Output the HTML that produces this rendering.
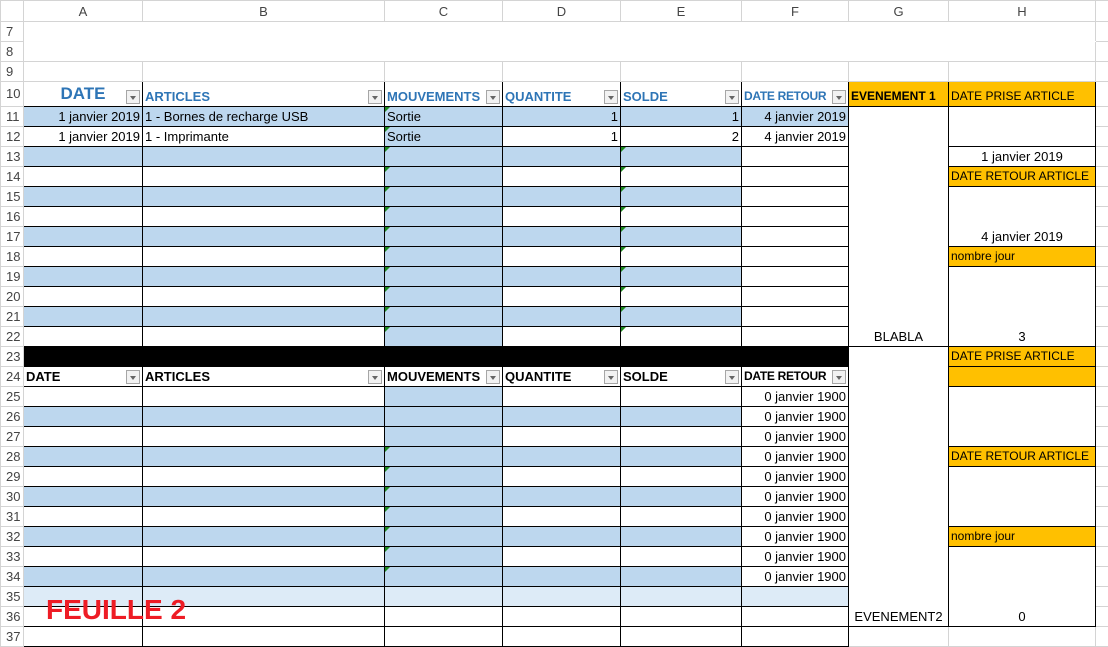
<!DOCTYPE html>
<html><head><meta charset="utf-8"><style>
body{margin:0;width:1108px;height:646px;overflow:hidden;background:#fff;font-family:"Liberation Sans",sans-serif;}
table{border-collapse:collapse;table-layout:fixed;position:absolute;left:0;top:0;width:1108px}
td{padding:0;text-indent:2px;border:1px solid #d4d4d4;height:19px;font-size:13px;color:#000;white-space:nowrap;overflow:hidden;position:relative;line-height:19px}
td.h{color:#444;text-align:left;text-indent:5px;font-size:13px;border-color:#d4d4d4;background:#fff}
tr.ch td{text-align:center;color:#444;height:20px;text-indent:0}
.b{background:#bdd7ee}.l{background:#ddebf7}.o{background:#ffc000;font-size:12px}.k{background:#000}
.x{border:1px solid #000}
.r{text-align:right;text-indent:0;padding-right:2px}
.c{text-align:center;text-indent:0}
.bt{vertical-align:bottom}
.hd{color:#2e75b6;font-weight:bold;}
.hb{font-weight:bold}
.n{font-size:12px;letter-spacing:-0.3px}
.f{position:absolute;right:2px;bottom:2px;width:14px;height:14px;border:1px solid #a6a6a6;background:#f2f2f2;box-sizing:border-box}
.f:after{content:"";position:absolute;left:3px;top:5px;border-left:3px solid transparent;border-right:3px solid transparent;border-top:4px solid #666}
.g:before{content:"";position:absolute;left:0;top:0;border-top:5px solid #1e8a1e;border-right:5px solid transparent}
tr.r10 td{height:24px;line-height:19px;vertical-align:bottom}
</style></head><body>
<table>
<colgroup><col style="width:23px"><col style="width:119px"><col style="width:242px"><col style="width:118px"><col style="width:118px"><col style="width:121px"><col style="width:107px"><col style="width:100px"><col style="width:147px"><col style="width:13px"></colgroup>
<tr class="ch"><td></td><td>A</td><td>B</td><td>C</td><td>D</td><td>E</td><td>F</td><td>G</td><td>H</td><td></td></tr>
<tr><td class="h">7</td><td colspan="8" style="border-bottom-color:#fff"></td><td></td></tr>
<tr><td class="h">8</td><td colspan="8"></td><td></td></tr>
<tr><td class="h">9</td><td></td><td></td><td></td><td></td><td></td><td></td><td></td><td></td><td></td></tr>
<tr class="r10"><td class="h" style="line-height:24px;vertical-align:middle">10</td><td class="x hd c" style="font-size:17px;line-height:24px;vertical-align:middle">DATE<span class="f"></span></td><td class="x hd">ARTICLES<span class="f"></span></td><td class="x hd">MOUVEMENTS<span class="f"></span></td><td class="x hd">QUANTITE<span class="f"></span></td><td class="x hd">SOLDE<span class="f"></span></td><td class="x hd n">DATE RETOUR<span class="f"></span></td><td class="x o hb">EVENEMENT 1</td><td class="x o">DATE PRISE ARTICLE</td><td></td></tr>
<tr><td class="h">11</td><td class="x b r">1 janvier 2019</td><td class="x b">1 - Bornes de recharge USB</td><td class="x b g">Sortie</td><td class="x b r">1</td><td class="x b r">1</td><td class="x b r">4 janvier 2019</td><td class="x c bt" rowspan="12">BLABLA</td><td class="x" rowspan="2"></td><td></td></tr>
<tr><td class="h">12</td><td class="x r">1 janvier 2019</td><td class="x">1 - Imprimante</td><td class="x b g">Sortie</td><td class="x r">1</td><td class="x r">2</td><td class="x r">4 janvier 2019</td><td></td></tr>
<tr><td class="h">13</td><td class="x b"></td><td class="x b"></td><td class="x b g"></td><td class="x b"></td><td class="x b g"></td><td class="x"></td><td class="x c">1 janvier 2019</td><td></td></tr>
<tr><td class="h">14</td><td class="x"></td><td class="x"></td><td class="x b g"></td><td class="x"></td><td class="x g"></td><td class="x"></td><td class="x o">DATE RETOUR ARTICLE</td><td></td></tr>
<tr><td class="h">15</td><td class="x b"></td><td class="x b"></td><td class="x b g"></td><td class="x b"></td><td class="x b g"></td><td class="x"></td><td class="x c bt" rowspan="3">4 janvier 2019</td><td></td></tr>
<tr><td class="h">16</td><td class="x"></td><td class="x"></td><td class="x b g"></td><td class="x"></td><td class="x g"></td><td class="x"></td><td></td></tr>
<tr><td class="h">17</td><td class="x b"></td><td class="x b"></td><td class="x b g"></td><td class="x b"></td><td class="x b g"></td><td class="x"></td><td></td></tr>
<tr><td class="h">18</td><td class="x"></td><td class="x"></td><td class="x b g"></td><td class="x"></td><td class="x g"></td><td class="x"></td><td class="x o">nombre jour</td><td></td></tr>
<tr><td class="h">19</td><td class="x b"></td><td class="x b"></td><td class="x b g"></td><td class="x b"></td><td class="x b g"></td><td class="x"></td><td class="x c bt" rowspan="4">3</td><td></td></tr>
<tr><td class="h">20</td><td class="x"></td><td class="x"></td><td class="x b g"></td><td class="x"></td><td class="x g"></td><td class="x"></td><td></td></tr>
<tr><td class="h">21</td><td class="x b"></td><td class="x b"></td><td class="x b g"></td><td class="x b"></td><td class="x b g"></td><td class="x"></td><td></td></tr>
<tr><td class="h">22</td><td class="x"></td><td class="x"></td><td class="x b g"></td><td class="x"></td><td class="x g"></td><td class="x"></td><td></td></tr>
<tr><td class="h">23</td><td class="x k"></td><td class="x k"></td><td class="x k"></td><td class="x k"></td><td class="x k"></td><td class="x k"></td><td class="x c bt" rowspan="14">EVENEMENT2</td><td class="x o">DATE PRISE ARTICLE</td><td></td></tr>
<tr><td class="h">24</td><td class="x hb">DATE<span class="f"></span></td><td class="x hb">ARTICLES<span class="f"></span></td><td class="x hb">MOUVEMENTS<span class="f"></span></td><td class="x hb">QUANTITE<span class="f"></span></td><td class="x hb">SOLDE<span class="f"></span></td><td class="x hb n">DATE RETOUR<span class="f"></span></td><td class="x o"></td><td></td></tr>
<tr><td class="h">25</td><td class="x"></td><td class="x"></td><td class="x b"></td><td class="x"></td><td class="x"></td><td class="x r">0 janvier 1900</td><td class="x" rowspan="3"></td><td></td></tr>
<tr><td class="h">26</td><td class="x b"></td><td class="x b"></td><td class="x b"></td><td class="x b"></td><td class="x b"></td><td class="x r">0 janvier 1900</td><td></td></tr>
<tr><td class="h">27</td><td class="x"></td><td class="x"></td><td class="x b"></td><td class="x"></td><td class="x"></td><td class="x r">0 janvier 1900</td><td></td></tr>
<tr><td class="h">28</td><td class="x b"></td><td class="x b"></td><td class="x b g"></td><td class="x b"></td><td class="x b"></td><td class="x r">0 janvier 1900</td><td class="x o">DATE RETOUR ARTICLE</td><td></td></tr>
<tr><td class="h">29</td><td class="x"></td><td class="x"></td><td class="x b g"></td><td class="x"></td><td class="x"></td><td class="x r">0 janvier 1900</td><td class="x" rowspan="3"></td><td></td></tr>
<tr><td class="h">30</td><td class="x b"></td><td class="x b"></td><td class="x b g"></td><td class="x b"></td><td class="x b"></td><td class="x r">0 janvier 1900</td><td></td></tr>
<tr><td class="h">31</td><td class="x"></td><td class="x"></td><td class="x b g"></td><td class="x"></td><td class="x"></td><td class="x r">0 janvier 1900</td><td></td></tr>
<tr><td class="h">32</td><td class="x b"></td><td class="x b"></td><td class="x b g"></td><td class="x b"></td><td class="x b"></td><td class="x r">0 janvier 1900</td><td class="x o">nombre jour</td><td></td></tr>
<tr><td class="h">33</td><td class="x"></td><td class="x"></td><td class="x b g"></td><td class="x"></td><td class="x"></td><td class="x r">0 janvier 1900</td><td class="x c bt" rowspan="4">0</td><td></td></tr>
<tr><td class="h">34</td><td class="x b"></td><td class="x b"></td><td class="x b g"></td><td class="x b"></td><td class="x b"></td><td class="x r">0 janvier 1900</td><td></td></tr>
<tr><td class="h">35</td><td class="x l"></td><td class="x l"></td><td class="x l"></td><td class="x l"></td><td class="x l"></td><td class="x l"></td><td></td></tr>
<tr><td class="h">36</td><td class="x"></td><td class="x"></td><td class="x"></td><td class="x"></td><td class="x"></td><td class="x"></td><td></td></tr>
<tr><td class="h">37</td><td class="x"></td><td class="x"></td><td class="x"></td><td class="x"></td><td class="x"></td><td class="x"></td><td></td><td></td><td></td></tr>
</table>
<div style="position:absolute;left:46px;top:594px;font-size:28px;font-weight:bold;color:#ee1c25">FEUILLE 2</div>
</body></html>
